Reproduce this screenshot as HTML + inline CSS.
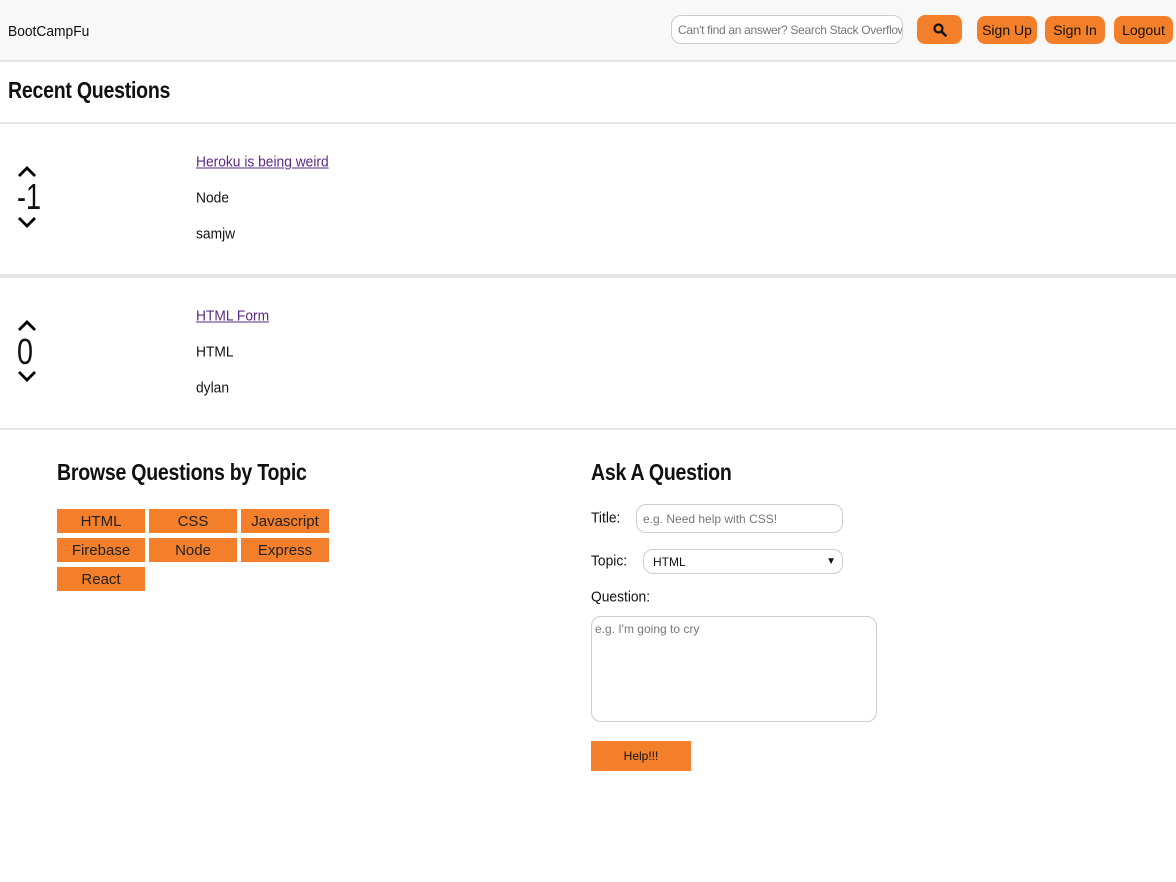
<!DOCTYPE html>
<html><head><meta charset="utf-8"><style>
*{box-sizing:border-box;margin:0;padding:0}
body{width:1176px;height:882px;background:#fff;font-family:"Liberation Sans",sans-serif;color:#111;position:relative;overflow:hidden}
.a{position:absolute;white-space:nowrap}
.nav{position:absolute;left:0;top:0;width:1176px;height:62px;background:#f8f8f8;border-bottom:2px solid #e5e5e5}
.ob{position:absolute;background:#f47f2a;border-radius:8px;font-size:14px;display:flex;align-items:center;justify-content:center;color:#111;white-space:nowrap}
.hr{position:absolute;left:0;width:1176px;background:#e5e5e5}
.t{font-size:15px;transform:translateY(-50%) scaleX(0.92);transform-origin:left center}
h2{font-size:23px;font-weight:bold;transform:scaleX(0.85);transform-origin:left top;letter-spacing:-0.3px}
.tb{position:absolute;width:88px;height:24px;background:#f47f2a;font-size:15px;display:flex;align-items:center;justify-content:center;color:#222;white-space:nowrap}
.inp{position:absolute;border:1px solid #ccc;border-radius:10px;background:#fff;font-size:12px;color:#777;padding-left:6px;display:flex;align-items:center;white-space:nowrap;overflow:hidden}
svg{position:absolute}
</style></head><body>
<div class="nav"></div>
<div class="a" style="left:8px;top:23px;font-size:15px;transform:scaleX(0.92);transform-origin:left">BootCampFu</div>
<div class="inp" style="left:671px;top:15px;width:232px;height:29px;font-size:12px;letter-spacing:-0.3px">Can't find an answer? Search Stack Overflow</div>
<div class="ob" style="left:917px;top:15px;width:45px;height:29px"><svg width="14" height="14" viewBox="0 0 14 14" style="position:static"><circle cx="5.5" cy="5.5" r="4" fill="none" stroke="#111" stroke-width="2.2"/><line x1="8.5" y1="8.5" x2="12.5" y2="12.5" stroke="#111" stroke-width="2.6" stroke-linecap="round"/></svg></div>
<div class="ob" style="left:977px;top:16px;width:60px;height:28px">Sign Up</div>
<div class="ob" style="left:1045px;top:16px;width:60px;height:28px">Sign In</div>
<div class="ob" style="left:1114px;top:16px;width:59px;height:28px">Logout</div>

<h2 class="a" style="left:8px;top:77px">Recent Questions</h2>
<div class="hr" style="top:122px;height:2px"></div>

<svg style="left:17px;top:165px" width="20" height="14"><path d="M2 11 L10 3 L18 11" fill="none" stroke="#000" stroke-width="2.8"/></svg>
<div class="a" style="left:17px;top:176px;font-size:36px;line-height:42px;transform:scaleX(0.75);transform-origin:left">-1</div>
<svg style="left:17px;top:215px" width="20" height="14"><path d="M2 3 L10 11 L18 3" fill="none" stroke="#000" stroke-width="2.8"/></svg>
<div class="a t" style="left:196px;top:162px;color:#5a2a82;text-decoration:underline">Heroku is being weird</div>
<div class="a t" style="left:196px;top:198px">Node</div>
<div class="a t" style="left:196px;top:234px">samjw</div>
<div class="hr" style="top:274px;height:4px"></div>

<svg style="left:17px;top:319px" width="20" height="14"><path d="M2 11 L10 3 L18 11" fill="none" stroke="#000" stroke-width="2.8"/></svg>
<div class="a" style="left:17px;top:331px;font-size:36px;line-height:42px;transform:scaleX(0.8);transform-origin:left">0</div>
<svg style="left:17px;top:369px" width="20" height="14"><path d="M2 3 L10 11 L18 3" fill="none" stroke="#000" stroke-width="2.8"/></svg>
<div class="a t" style="left:196px;top:316px;color:#5a2a82;text-decoration:underline">HTML Form</div>
<div class="a t" style="left:196px;top:352px">HTML</div>
<div class="a t" style="left:196px;top:388px">dylan</div>
<div class="hr" style="top:428px;height:2px"></div>

<h2 class="a" style="left:57px;top:459px">Browse Questions by Topic</h2>
<div class="tb" style="left:57px;top:509px">HTML</div>
<div class="tb" style="left:149px;top:509px">CSS</div>
<div class="tb" style="left:241px;top:509px">Javascript</div>
<div class="tb" style="left:57px;top:538px">Firebase</div>
<div class="tb" style="left:149px;top:538px">Node</div>
<div class="tb" style="left:241px;top:538px">Express</div>
<div class="tb" style="left:57px;top:567px">React</div>

<h2 class="a" style="left:591px;top:459px">Ask A Question</h2>
<div class="a t" style="left:591px;top:518px">Title:</div>
<div class="inp" style="left:636px;top:504px;width:207px;height:29px">e.g. Need help with CSS!</div>
<div class="a t" style="left:591px;top:561px">Topic:</div>
<div class="inp" style="left:643px;top:549px;width:200px;height:25px;color:#111;font-size:12px;padding-left:9px">HTML<span style="position:absolute;right:6px;font-size:10px">▼</span></div>
<div class="a t" style="left:591px;top:597px">Question:</div>
<div class="inp" style="left:591px;top:616px;width:286px;height:106px;align-items:flex-start;padding-top:5px;padding-left:3px">e.g. I'm going to cry</div>
<div class="ob" style="left:591px;top:741px;width:100px;height:30px;border-radius:0;font-size:12px">Help!!!</div>
</body></html>
